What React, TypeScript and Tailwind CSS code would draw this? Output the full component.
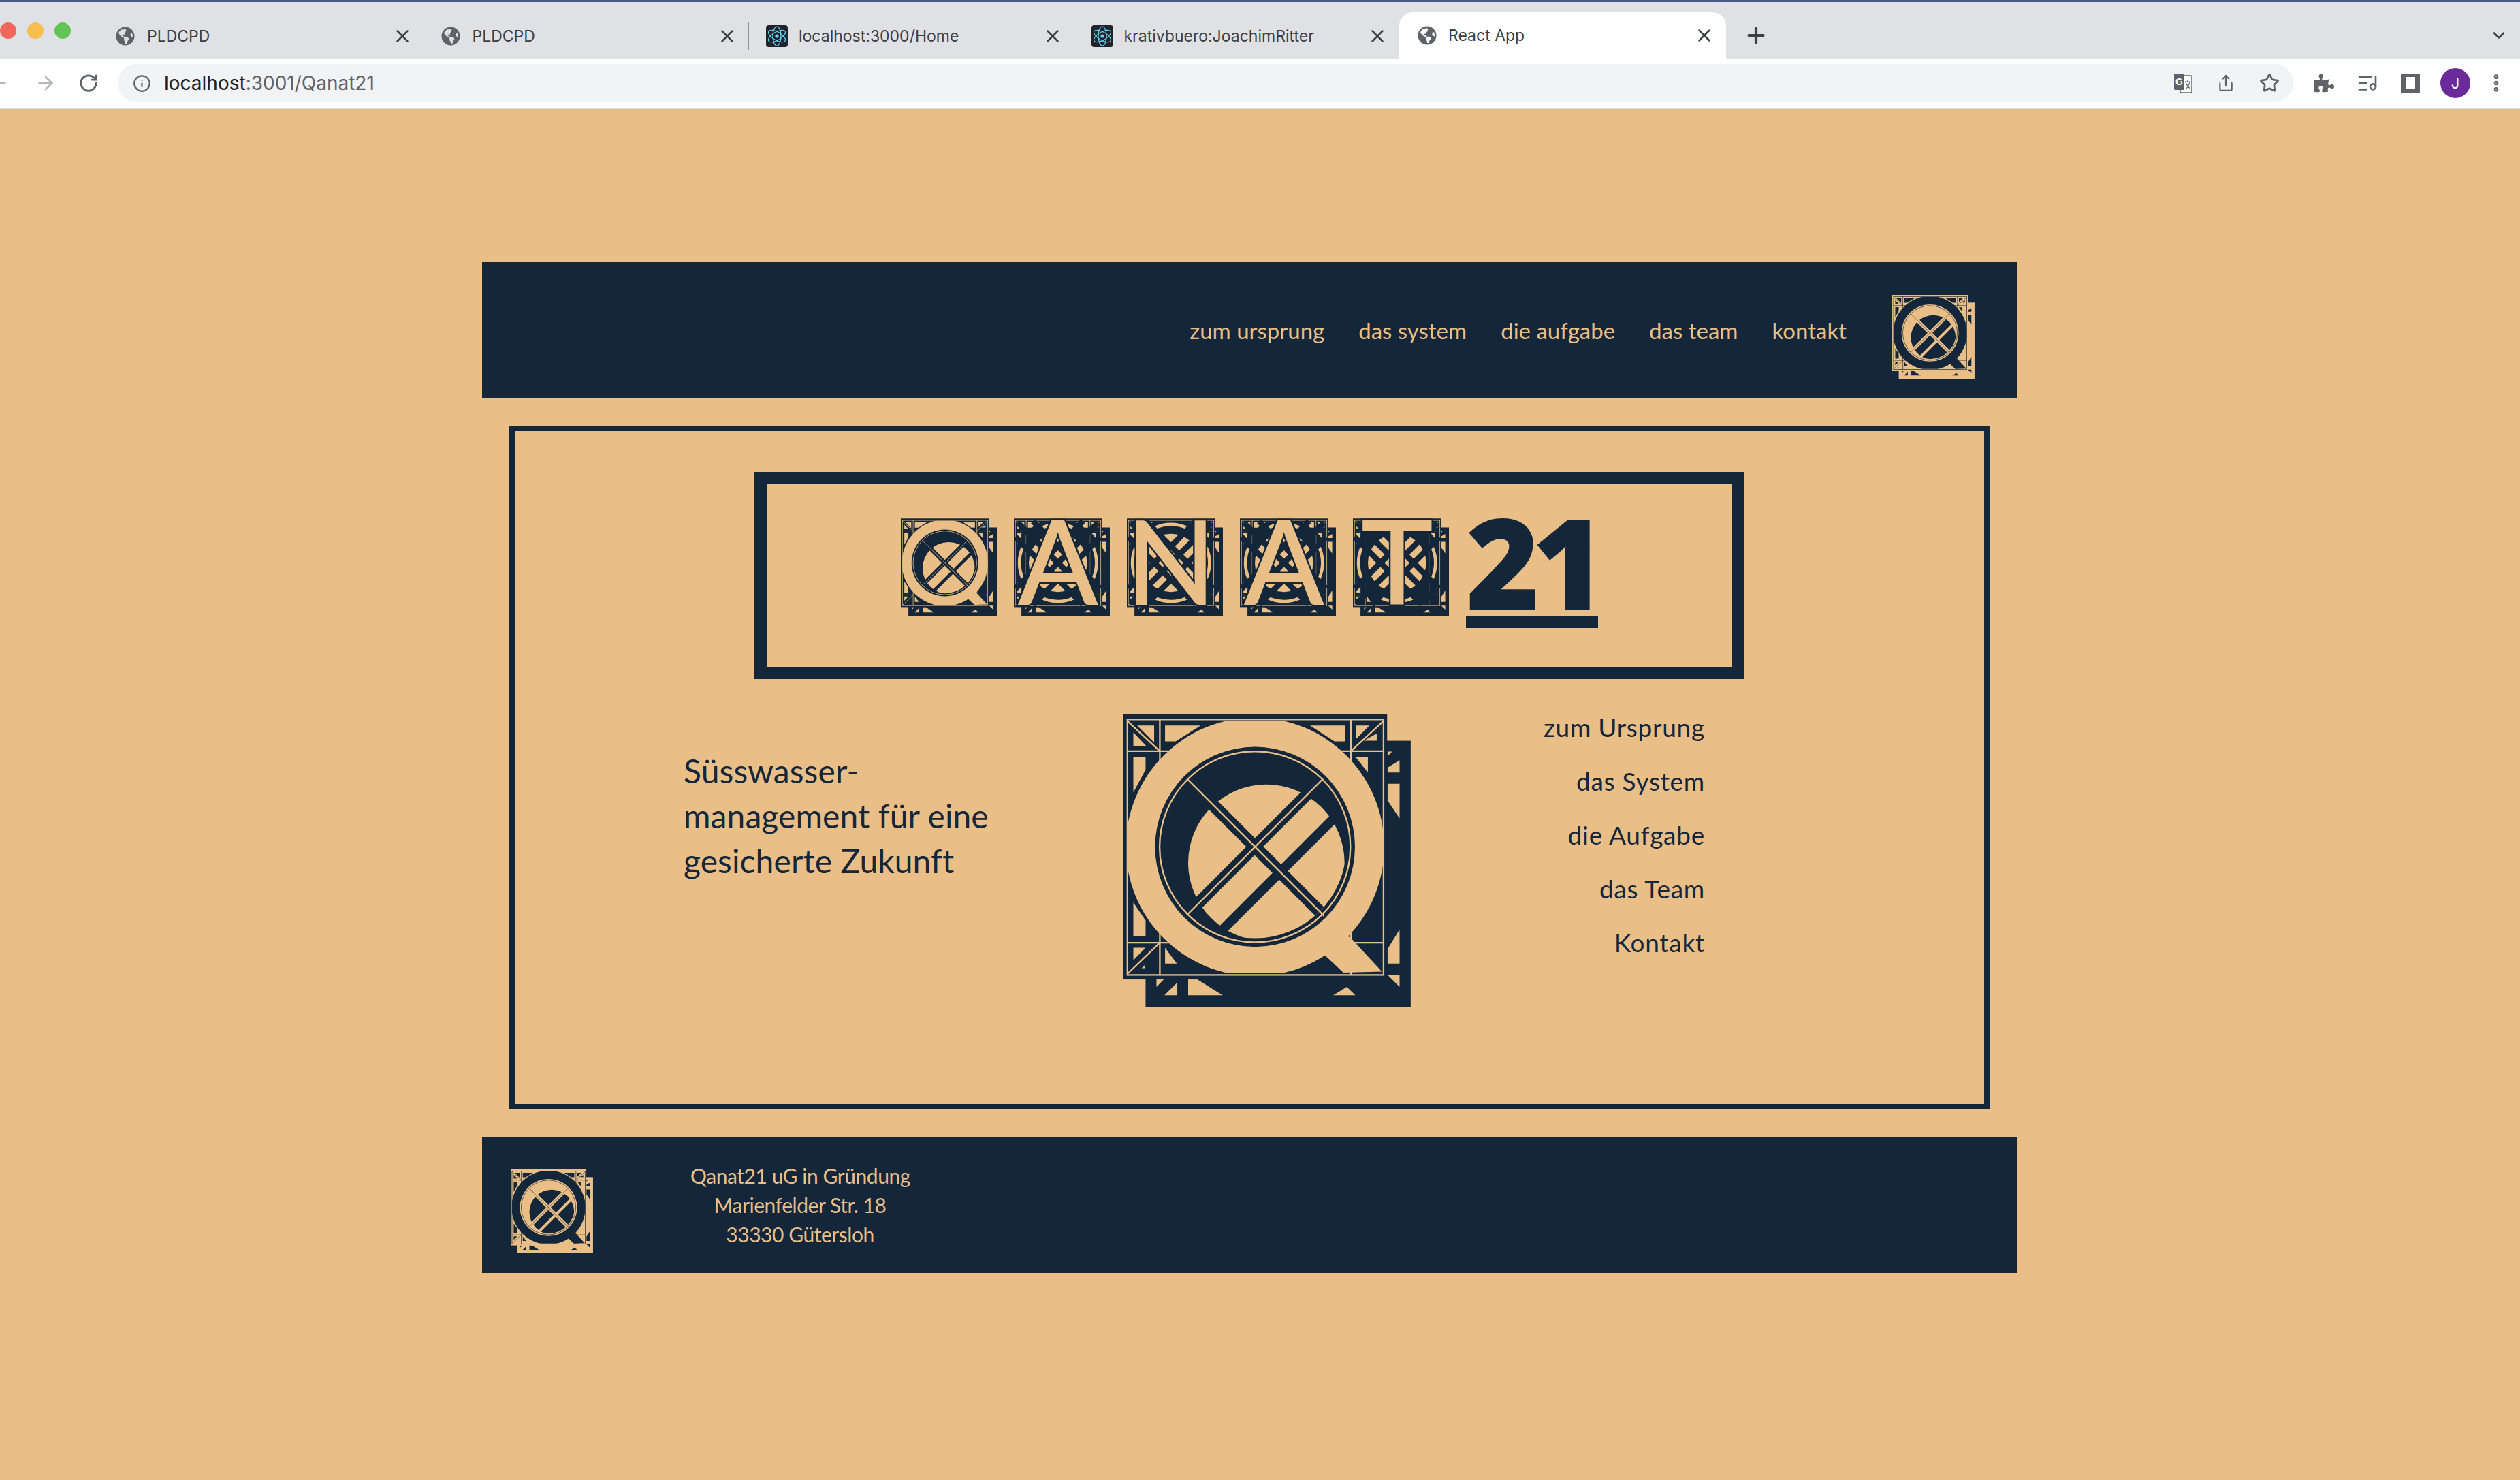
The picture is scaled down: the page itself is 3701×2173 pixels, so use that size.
import { ArrowLeft, ArrowRight, ChevronDown, EllipsisVertical, Info, ListMusic, Plus, RotateCw, Share, Star, X } from "lucide-react";
import { FaGlobeAmericas, FaPuzzlePiece } from "react-icons/fa";

const DARK = "#14273a";
const SAND = "#eabf87";

const tabs = [
  { title: "PLDCPD", icon: "globe" },
  { title: "PLDCPD", icon: "globe" },
  { title: "localhost:3000/Home", icon: "react" },
  { title: "krativbuero:JoachimRitter", icon: "react" },
];

const navItems = ["zum ursprung", "das system", "die aufgabe", "das team", "kontakt"];
const menuItems = ["zum Ursprung", "das System", "die Aufgabe", "das Team", "Kontakt"];

const ReactIcon = () => (
  <svg viewBox="0 0 32 32" className="h-8 w-8 shrink-0">
    <rect width="32" height="32" rx="4" fill="#20232a" />
    <g fill="none" stroke="#61dafb" strokeWidth="1.2">
      <ellipse cx="16" cy="16" rx="6" ry="14" />
      <ellipse cx="16" cy="16" rx="6" ry="14" transform="rotate(60 16 16)" />
      <ellipse cx="16" cy="16" rx="6" ry="14" transform="rotate(-60 16 16)" />
    </g>
    <circle cx="16" cy="16" r="2.6" fill="#61dafb" />
  </svg>
);

const TranslateIcon = () => (
  <svg viewBox="0 0 28 30" className="h-[30px] w-[28px]">
    <rect x="10" y="4" width="17" height="25" rx="1.5" fill="#fff" stroke="#5f6368" strokeWidth="1.5" />
    <path d="M1 2.5A1.5 1.5 0 0 1 2.5 1H15v24H2.500A1.500 1.500 0 0 1 1 23.500Z" fill="#5f6368" />
    <text x="3" y="18" fontSize="14" fontWeight="700" fontFamily="Liberation Sans, sans-serif" fill="#fff">G</text>
    <path d="M17 13h8M21 11v2M24 13c-1 5-4 9-6 11M18 14c1 3 4 7 7 9" fill="none" stroke="#5f6368" strokeWidth="1.2" />
  </svg>
);

const frameLight = [
  "150,105 225,105 225,180",
  "133,135 190,195 133,195",
  "273,105 430,105 320,175 273,175",
  "133,243 187,243 187,300 133,400",
  "913,105 1067,105 1067,175 1020,175",
  "1115,105 1175,105 1115,165",
  "1207,140 1207,172 1150,172",
  "1115,245 1168,245 1168,312",
  "133,885 187,965 187,1035 133,1035",
  "133,1085 187,1085 133,1140",
  "185,1160 185,1175 170,1175",
  "273,1085 325,1155 273,1155",
];

const shadowLight = [
  "1255,220 1275,220 1255,240",
  "1255,290 1308,258 1308,312 1255,312",
  "1255,362 1308,362 1308,515 1255,435",
  "1308,1005 1308,1155 1255,1155 1255,1090",
  "1255,1205 1308,1205 1308,1258",
  "235,1225 268,1225 235,1258",
  "327,1238 327,1295 270,1295",
  "375,1225 415,1225 527,1295 375,1295",
  "1015,1295 1075,1258 1113,1295",
];

// frame, shadow and corner lattice shared by every tile
const Frame = ({ fg, bg }: { fg: string; bg: string }) => (
  <>
    <rect x="187" y="172" width="1170" height="1173" fill={fg} />
    {shadowLight.map((p) => (
      <polygon key={p} points={p} fill={bg} />
    ))}
    <rect x="87" y="53" width="1166" height="1172" fill={fg} />
    <rect x="107" y="78" width="1130" height="1127" fill="none" stroke={bg} strokeWidth="7" />
    {frameLight.map((p) => (
      <polygon key={p} points={p} fill={bg} />
    ))}
    <g stroke={bg} strokeWidth="7" fill="none">
      <path d="M107 218H1237M107 1063H1237M250 78V1205M1093 78V1205" />
      <path d="M107 85L250 218M1237 85L1093 218M107 1200L250 1063" />
    </g>
  </>
);

const Cross = ({ fg, bg }: { fg: string; bg: string }) => (
  <>
    <circle cx="670" cy="640" r="441" fill={fg} />
    <circle cx="670" cy="640" r="421" fill="none" stroke={bg} strokeWidth="7" />
    <circle cx="720" cy="710" r="345" fill={bg} clipPath="url(#q-inner)" />
    <g clipPath="url(#q-inner)" stroke={fg} fill="none">
      <path d="M1000 308L340 968" strokeWidth="52" />
      <path d="M1190 342L520 1012" strokeWidth="42" />
      <path d="M340 310L1000 970" strokeWidth="54" />
    </g>
    <path d="M370 340L975 945M970 340L370 940" stroke={bg} strokeWidth="7" fill="none" />
  </>
);

const Logo = ({ fg = DARK, bg = SAND, className }: { fg?: string; bg?: string; className: string }) => (
  <svg viewBox="87 53 1270 1292" className={className} role="img" aria-label="Qanat21 Logo">
    <Frame fg={fg} bg={bg} />
    <circle cx="670" cy="640" r="570" fill={bg} clipPath="url(#q-outer)" />
    <polygon points="1040,1000 1100,1050 1230,1190 1060,1195 975,1115" fill={bg} />
    <Cross fg={fg} bg={bg} />
  </svg>
);

// A, N and T tiles: open lattice behind a real text letter
const LetterTile = ({ letter, stretch }: { letter: string; stretch?: number }) => (
  <svg viewBox="87 53 1270 1292" className="h-[146px] w-[141px] shrink-0 overflow-visible">
    <Frame fg={DARK} bg={SAND} />
    <rect x="250" y="218" width="843" height="845" fill={DARK} />
    <circle cx="670" cy="640" r="510" fill="none" stroke={SAND} strokeWidth="42" strokeDasharray="445 356" strokeDashoffset="222" clipPath="url(#q-outer)" />
    <circle cx="670" cy="640" r="385" fill={SAND} />
    <g stroke={DARK} fill="none" strokeWidth="76">
      <path d="M140 110L1200 1170M1200 110L140 1170" />
      <path d="M110 980L1000 90M340 1190L1230 300" />
      <path d="M340 90L1230 980M110 300L1000 1190" />
    </g>
    <text
      x="670"
      y="1196"
      textAnchor="middle"
      fontFamily="Lato, sans-serif"
      fontWeight="500"
      fontSize="1560"
      fill={SAND}
      stroke={DARK}
      strokeWidth="44"
      paintOrder="stroke"
      textLength={stretch}
      lengthAdjust="spacingAndGlyphs"
    >
      {letter}
    </text>
  </svg>
);

export default function App() {
  return (
    <div className="flex h-[2173px] w-[3701px] flex-col overflow-hidden bg-[#eabf87] font-['Lato',sans-serif] text-[#14273a]">
      <svg className="block h-0 w-0">
        <defs>
          <clipPath id="q-inner">
            <circle cx="670" cy="640" r="403" />
          </clipPath>
          <clipPath id="q-outer">
            <rect x="107" y="85" width="1130" height="1110" />
          </clipPath>
        </defs>
      </svg>

      {/* browser chrome */}
      <div className="font-['Inter',sans-serif]">
        <div className="h-[3px] bg-[#4a5688]" />
        <div className="relative flex h-[83px] items-end bg-[#dfe1e5] pl-[145px]">
          <div className="absolute top-[30px] left-0 flex gap-[16px]">
            <span className="h-[24px] w-[24px] rounded-full bg-[#f1675c]" />
            <span className="h-[24px] w-[24px] rounded-full bg-[#f6bd4f]" />
            <span className="h-[24px] w-[24px] rounded-full bg-[#61c454]" />
          </div>
          {tabs.map((tab) => (
            <div key={tab.title + tab.icon} className="mb-[13px] flex h-[40px] w-[477.5px] shrink-0 items-center border-r border-[#8f9296] pr-[16px] pl-[25px] text-[23px] text-[#3c4043]">
              {tab.icon === "globe" ? <FaGlobeAmericas className="h-[28px] w-[28px] shrink-0 text-[#5f6368]" /> : <ReactIcon />}
              <span className={tab.icon === "globe" ? "ml-[18px]" : "ml-[16px]"}>{tab.title}</span>
              <X className="ml-auto h-[30px] w-[30px] shrink-0 text-[#3c4043]" strokeWidth={2} />
            </div>
          ))}
          <div className="flex h-[68px] w-[480px] shrink-0 items-center rounded-t-[20px] bg-white pr-[17px] pl-[27px] text-[23px] text-[#3c4043]">
            <FaGlobeAmericas className="h-[28px] w-[28px] shrink-0 text-[#5f6368]" />
            <span className="ml-[17px]">React App</span>
            <X className="ml-auto h-[30px] w-[30px] shrink-0" strokeWidth={2} />
          </div>
          <Plus className="mb-[16px] ml-[26px] h-[36px] w-[36px] text-[#3c4043]" strokeWidth={2.8} />
          <ChevronDown className="mb-[20px] ml-auto mr-[17px] h-[28px] w-[28px] text-[#3c4043]" strokeWidth={2.2} />
        </div>
        <div className="flex h-[72px] items-center bg-white">
          <ArrowLeft className="ml-[-18px] h-[32px] w-[32px] text-[#b5b7ba]" />
          <ArrowRight className="ml-[37px] h-[32px] w-[32px] text-[#b5b7ba]" />
          <RotateCw className="ml-[32px] h-[30px] w-[30px] text-[#5f6368]" strokeWidth={2.2} />
          <div className="ml-[28px] flex h-[56px] w-[3195px] items-center rounded-full bg-[#f1f3f4] pr-[20px] pl-[22px]">
            <Info className="h-[27px] w-[27px] text-[#5f6368]" />
            <span className="ml-[19px] text-[28px] text-[#202124]">
              localhost<span className="text-[#5f6368]">:3001/Qanat21</span>
            </span>
            <div className="ml-auto flex items-center gap-[36px]">
              <TranslateIcon />
              <Share className="h-[30px] w-[26px] text-[#5f6368]" />
              <Star className="h-[30px] w-[30px] text-[#5f6368]" strokeWidth={2.2} />
            </div>
          </div>
          <FaPuzzlePiece className="ml-[30px] h-[30px] w-[30px] text-[#5f6368]" />
          <ListMusic className="ml-[33px] h-[32px] w-[32px] text-[#5f6368]" />
          <div className="ml-[33px] h-[28px] w-[28px] border-x-[7px] border-y-[5px] border-[#5f6368]" />
          <div className="ml-[30px] flex h-[44px] w-[44px] items-center justify-center rounded-full bg-[#6b2a9a] text-[22px] text-white">J</div>
          <EllipsisVertical className="ml-[22px] h-[32px] w-[32px] text-[#5f6368]" strokeWidth={3} />
        </div>
        <div className="h-[2px] bg-[#dadce0]" />
      </div>

      {/* page */}
      <div className="mt-[225px] ml-[708px] flex w-[2254px] flex-col">
        <header className="flex h-[200px] items-center justify-end bg-[#14273a] pr-[62px] text-[33px] text-[#eabf87]">
          <nav className="mt-[2px] flex gap-[50px]">
            {navItems.map((item) => (
              <a key={item}>{item}</a>
            ))}
          </nav>
          <Logo fg={SAND} bg={DARK} className="mt-[19px] ml-[67px] h-[123px] w-[121px]" />
        </header>

        <main className="mx-[40px] mt-[40px] flex h-[1004px] flex-col items-center border-[8px] border-[#14273a] pt-[60px]">
          <div className="flex h-[304px] w-[1454px] items-start justify-center gap-[25px] border-[18px] border-[#14273a] pt-[49px]">
            <div className="flex gap-[25px]" aria-label="Qanat">
              <Logo className="h-[146px] w-[141px] shrink-0" />
              <LetterTile letter="A" />
              <LetterTile letter="N" />
              <LetterTile letter="A" />
              <LetterTile letter="T" stretch={960} />
            </div>
            <div className="box-content h-[144px] w-[194px] border-b-[18px] border-[#14273a] text-center font-['Open_Sans',sans-serif] text-[184px] leading-[128px] font-extrabold tracking-[-0.06em]">
              21
            </div>
          </div>

          <div className="mt-[51px] flex w-full">
            <p className="mt-[51px] w-[893px] pl-[248px] text-[48px] leading-[66px] tracking-[0.002em]">
              Süsswasser-
              <br />
              management für eine
              <br />
              gesicherte Zukunft
            </p>
            <Logo className="h-[430px] w-[423px] shrink-0" />
            <ul className="-mt-[5px] flex w-[432px] flex-col gap-[30px] text-right text-[37px] leading-[49px] tracking-[0.02em]">
              {menuItems.map((item) => (
                <li key={item}>{item}</li>
              ))}
            </ul>
          </div>
        </main>

        <footer className="mt-[40px] flex h-[200px] items-center bg-[#14273a] pl-[42px] text-[#eabf87]">
          <Logo fg={SAND} bg={DARK} className="mt-[19px] h-[123px] w-[121px]" />
          <address className="ml-[143px] w-[322px] whitespace-nowrap text-center text-[30px] leading-[43px] tracking-[-0.015em] not-italic">
            Qanat21 uG in Gründung
            <br />
            Marienfelder Str. 18
            <br />
            33330 Gütersloh
          </address>
        </footer>
      </div>
    </div>
  );
}
